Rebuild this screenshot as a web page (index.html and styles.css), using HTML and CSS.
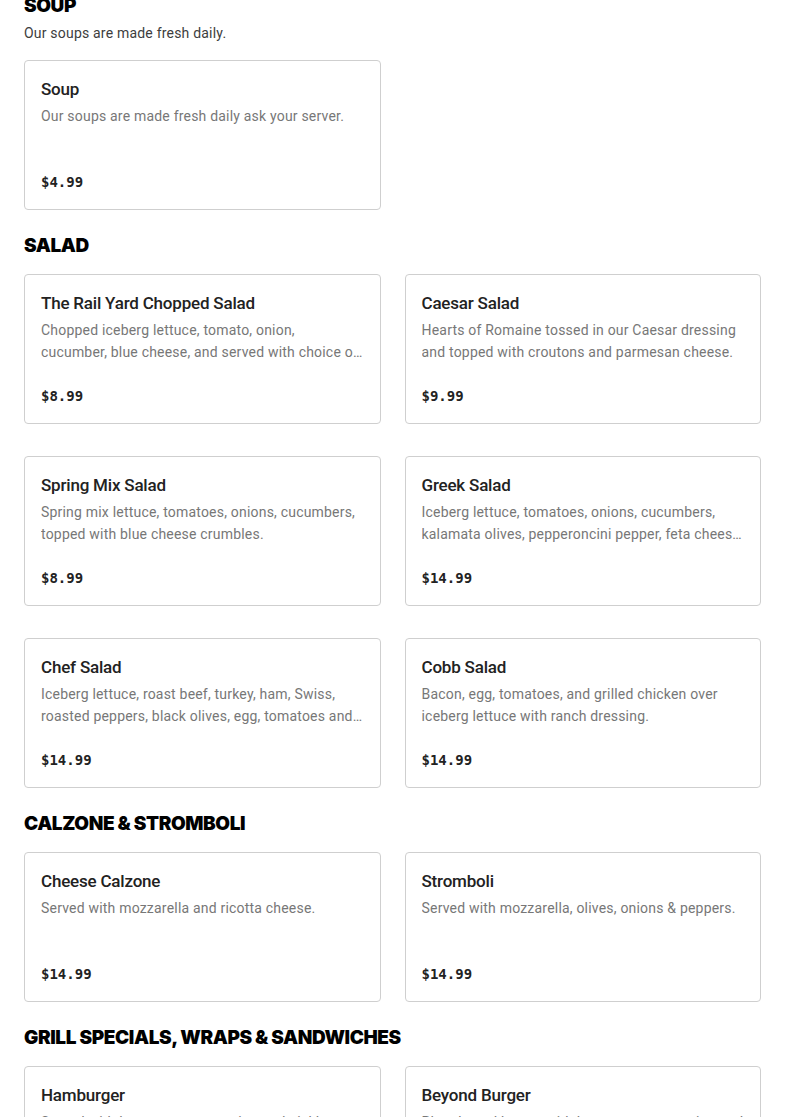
FILE: index.html
```html
<!DOCTYPE html>
<html>
<head>
<meta charset="utf-8">
<link rel="stylesheet" href="styles.css">
</head>
<body>
<main class="menu">
  <section class="section">
    <h2 class="section-title">SOUP</h2>
    <p class="section-desc">Our soups are made fresh daily.</p>
    <div class="grid">
      <div class="card">
        <h3 class="item-name">Soup</h3>
        <p class="item-desc">Our soups are made fresh daily ask your server.</p>
        <div class="price">$4.99</div>
      </div>
    </div>
  </section>

  <section class="section">
    <h2 class="section-title">SALAD</h2>
    <div class="grid">
      <div class="card">
        <h3 class="item-name">The Rail Yard Chopped Salad</h3>
        <p class="item-desc">Chopped iceberg lettuce, tomato, onion, cucumber, blue cheese, and served with choice of dressing.</p>
        <div class="price">$8.99</div>
      </div>
      <div class="card">
        <h3 class="item-name">Caesar Salad</h3>
        <p class="item-desc">Hearts of Romaine tossed in our Caesar dressing and topped with croutons and parmesan cheese.</p>
        <div class="price">$9.99</div>
      </div>
      <div class="card">
        <h3 class="item-name">Spring Mix Salad</h3>
        <p class="item-desc">Spring mix lettuce, tomatoes, onions, cucumbers, topped with blue cheese crumbles.</p>
        <div class="price">$8.99</div>
      </div>
      <div class="card">
        <h3 class="item-name">Greek Salad</h3>
        <p class="item-desc">Iceberg lettuce, tomatoes, onions, cucumbers, kalamata olives, pepperoncini pepper, feta cheese and greek dressing.</p>
        <div class="price">$14.99</div>
      </div>
      <div class="card">
        <h3 class="item-name">Chef Salad</h3>
        <p class="item-desc">Iceberg lettuce, roast beef, turkey, ham, Swiss, roasted peppers, black olives, egg, tomatoes and onions.</p>
        <div class="price">$14.99</div>
      </div>
      <div class="card">
        <h3 class="item-name">Cobb Salad</h3>
        <p class="item-desc">Bacon, egg, tomatoes, and grilled chicken over iceberg lettuce with ranch dressing.</p>
        <div class="price">$14.99</div>
      </div>
    </div>
  </section>

  <section class="section">
    <h2 class="section-title">CALZONE &amp; STROMBOLI</h2>
    <div class="grid">
      <div class="card">
        <h3 class="item-name">Cheese Calzone</h3>
        <p class="item-desc">Served with mozzarella and ricotta cheese.</p>
        <div class="price">$14.99</div>
      </div>
      <div class="card">
        <h3 class="item-name">Stromboli</h3>
        <p class="item-desc">Served with mozzarella, olives, onions &amp; peppers.</p>
        <div class="price">$14.99</div>
      </div>
    </div>
  </section>

  <section class="section">
    <h2 class="section-title">GRILL SPECIALS, WRAPS &amp; SANDWICHES</h2>
    <div class="grid">
      <div class="card">
        <h3 class="item-name">Hamburger</h3>
        <p class="item-desc">Served with lettuce, tomato, onion and pickle on a toasted bun with fries.</p>
        <div class="price">$12.99</div>
      </div>
      <div class="card">
        <h3 class="item-name">Beyond Burger</h3>
        <p class="item-desc">Plant based burger with lettuce, tomato, onion and pickle on a toasted bun.</p>
        <div class="price">$14.99</div>
      </div>
    </div>
  </section>
</main>
</body>
</html>
```
FILE: styles.css
```css
html, body {
  margin: 0;
  padding: 0;
  background: #ffffff;
}

body {
  font-family: "Roboto", "Liberation Sans", sans-serif;
  color: #222222;
}

.menu {
  padding: 0 24px;
  margin-top: -6px;
}

.section {
  margin-bottom: 24px;
}

.section-title {
  margin: 0;
  font-family: "Inter", "Liberation Sans", sans-serif;
  font-weight: 900;
  font-size: 19px;
  line-height: 24px;
  color: #000;
  letter-spacing: -0.4px;
}

.section-desc {
  margin: 4px 0 0;
  font-size: 14px;
  line-height: 22px;
  letter-spacing: 0.2px;
  color: #3d3d3d;
}

.grid {
  display: grid;
  grid-template-columns: 1fr 1fr;
  column-gap: 24px;
  row-gap: 32px;
  margin-top: 16px;
}

.card {
  box-sizing: border-box;
  height: 150px;
  border: 1px solid #cfcfcf;
  border-radius: 4px;
  padding: 16px 16px 17px;
  display: flex;
  flex-direction: column;
}

.item-name {
  margin: 0;
  font-size: 17px;
  line-height: 24px;
  font-weight: 500;
  letter-spacing: -0.2px;
  color: #222222;
}

.item-desc {
  margin: 4px 0 0;
  font-size: 14px;
  line-height: 22px;
  letter-spacing: 0.2px;
  color: #777777;
  display: -webkit-box;
  -webkit-line-clamp: 2;
  -webkit-box-orient: vertical;
  overflow: hidden;
}

.price {
  margin-top: auto;
  font-family: "DejaVu Sans Mono", "Liberation Mono", monospace;
  font-weight: bold;
  font-size: 14px;
  line-height: 20px;
  color: #222222;
}
```
